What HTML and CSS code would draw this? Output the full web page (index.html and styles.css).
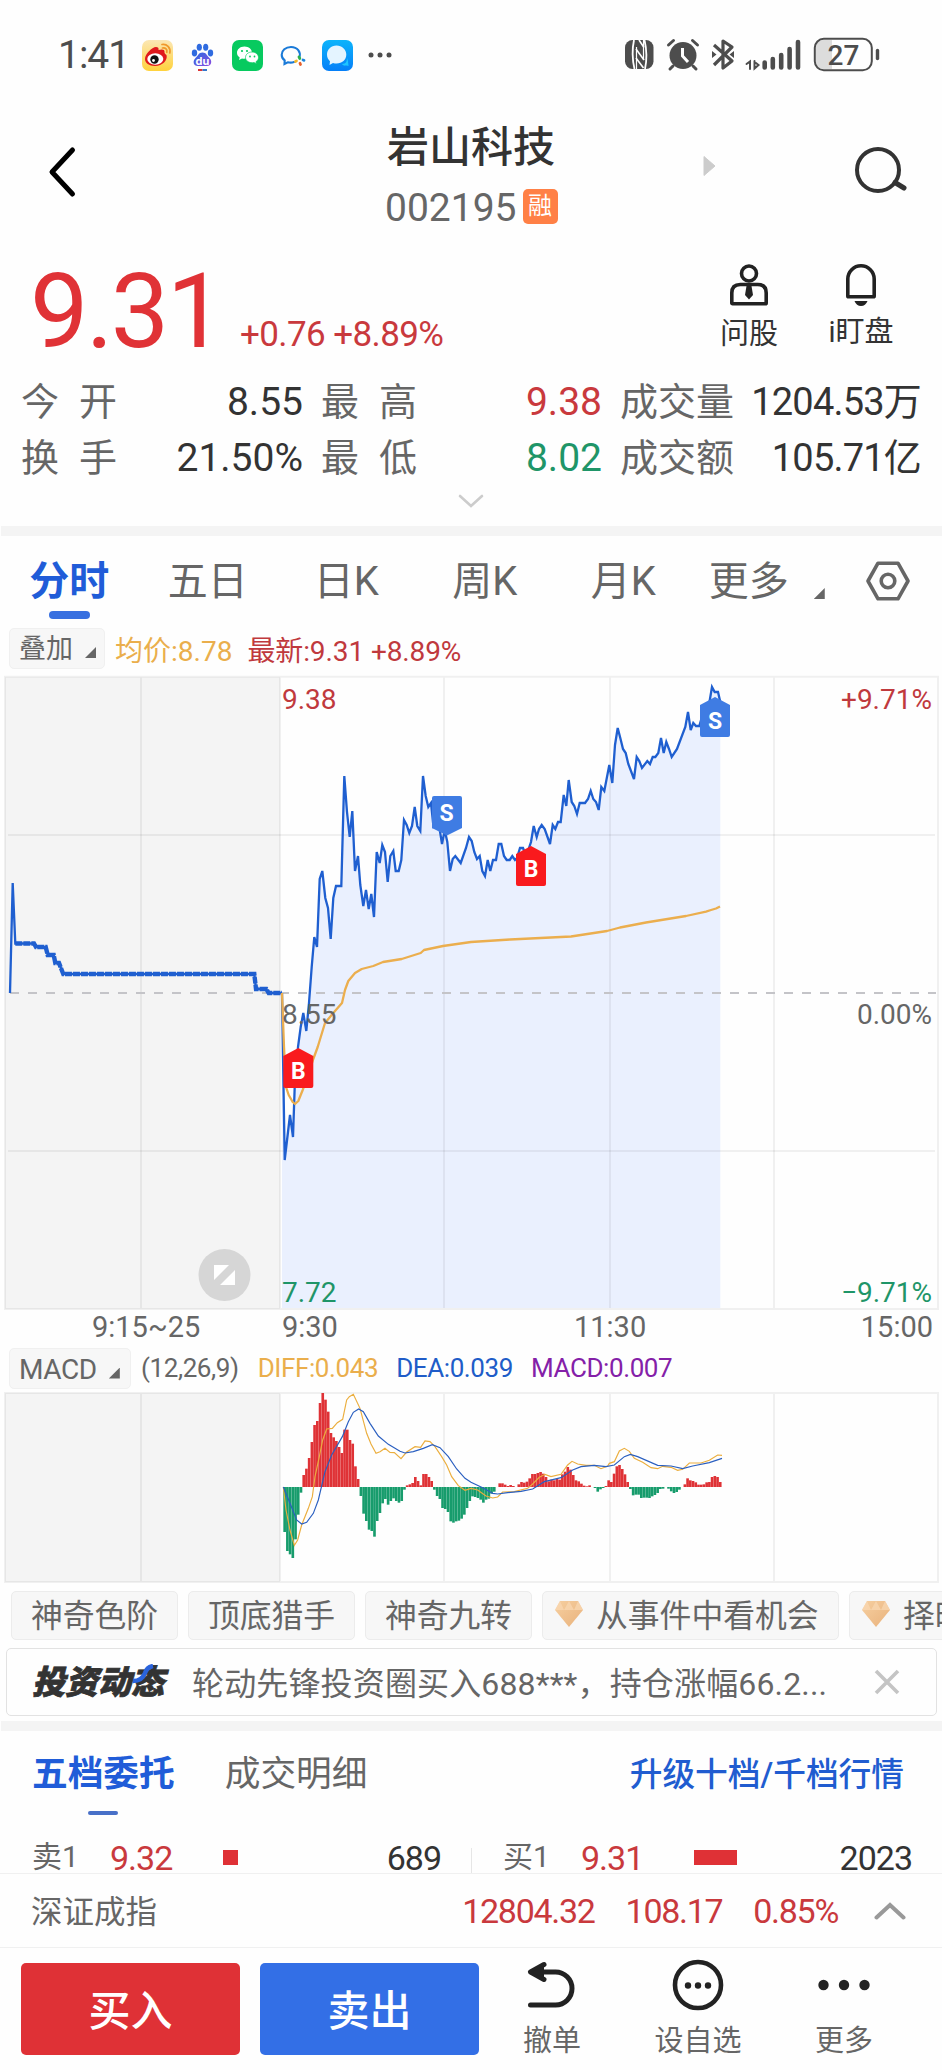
FILE: index.html
```html
<!DOCTYPE html>
<html lang="zh-CN">
<head>
  <meta charset="UTF-8">
  <meta name="viewport" content="width=device-width, initial-scale=1.0">
  <title>岩山科技 002195</title>
  <link rel="stylesheet" href="styles.css">
</head>
<body>
  <div class="status">
    <span class="time">1:41</span>
    <svg class="app" viewBox="0 0 31 31">
      <defs>
        <linearGradient id="wb" x1="0" y1="0" x2="0" y2="1"><stop offset="0" stop-color="#fbe7b5"/><stop offset="1" stop-color="#ffd23c"/></linearGradient>
        <linearGradient id="msg" x1="0" y1="0" x2="0" y2="1"><stop offset="0" stop-color="#0db4fb"/><stop offset="1" stop-color="#057ff8"/></linearGradient>
        <linearGradient id="du" x1="0" y1="0" x2="1" y2="1"><stop offset="0" stop-color="#2a6be0"/><stop offset="1" stop-color="#8a4be0"/></linearGradient>
        <linearGradient id="gem" x1="0" y1="0" x2="1" y2="1"><stop offset="0" stop-color="#f6cfa0"/><stop offset="1" stop-color="#e9b27c"/></linearGradient>
      </defs>
      <rect width="31" height="31" rx="7" fill="url(#wb)"/>
      <path d="M3 19C3 14 10 7 14 7c2 0 3 1 2.500 3 3-1 6.500-1 6 2-.2 1 .5 2 2 3 1.500 5-4 11-11.500 11C7 26 3 23 3 19z" fill="#e0191c"/>
      <ellipse cx="13.300" cy="19" rx="8" ry="5.800" fill="#fff"/>
      <circle cx="12.500" cy="19.500" r="4.200" fill="#111"/>
      <circle cx="11.500" cy="20.500" r="1.400" fill="#fff"/>
      <path d="M20 4.500c4.500-1 9 3 7.800 8.500M20.500 8c3-.5 5 1.500 4.300 4.300" fill="none" stroke="#f0982a" stroke-width="1.700" stroke-linecap="round"/>
    </svg>
    <svg class="app" viewBox="0 0 31 31">
      <g fill="#2f6be0">
        <ellipse cx="7.500" cy="13" rx="2.700" ry="3.400"/>
        <ellipse cx="12.300" cy="7.300" rx="2.600" ry="3.500"/>
        <ellipse cx="18.700" cy="7.300" rx="2.600" ry="3.500"/>
        <ellipse cx="23.500" cy="13" rx="2.700" ry="3.400"/>
      </g>
      <path d="M15.500 12.500c4 0 4 3 7 5.500 3 3 2 8-2.500 8h-9c-5 0-5.500-5-2.500-8 3-2.500 3-5.500 7-5.500z" fill="url(#du)"/>
      <text x="15.500" y="24.500" class="du-text">du</text>
      <path d="M11 30h4.500" stroke="#d33" stroke-width="2"/><path d="M15.500 30h4.500" stroke="#37c" stroke-width="2"/>
    </svg>
    <svg class="app" viewBox="0 0 31 31">
      <rect width="31" height="31" rx="7" fill="#07ca5f"/>
      <path d="M12.500 6.500c-4.500 0-7.500 3-7.500 6.300 0 2 1 3.700 2.700 4.800L7 20l3-1.500c4.500 1 10-1.500 10-5.700 0-3.500-3.300-6.300-7.500-6.300z" fill="#fff"/>
      <path d="M20 12c-3.800 0-6.500 2.500-6.500 5.500 0 3.500 4 6 8.500 5l2.500 1.300-.6-2c1.600-1 2.600-2.500 2.600-4.300 0-3-2.900-5.500-6.500-5.500z" fill="#fff" stroke="#07ca5f" stroke-width=".7"/>
      <g fill="#07ca5f"><circle cx="10" cy="11" r="1.100"/><circle cx="15" cy="11" r="1.100"/><circle cx="18" cy="16.500" r=".9"/><circle cx="22.500" cy="16.500" r=".9"/></g>
    </svg>
    <svg class="app" viewBox="0 0 31 31">
      <path d="M22.500 17c1.500-5-2-10-8.500-10-5.500 0-9.300 3.500-9.300 7.700 0 2.500 1.200 4.400 3 5.700L7.500 24l3.300-1.700c2 .5 4.200.5 6.200-.2" fill="none" stroke="#1a7ad8" stroke-width="2.100" stroke-linecap="round"/>
      <g fill="none" stroke-width="2.800" stroke-linecap="round"><path d="M22 17l.8 1.500" stroke="#2db14a"/><path d="M26 20l1 .3" stroke="#1a86dd"/><path d="M18.500 21.500l1-.6" stroke="#f3b52a"/><path d="M23.500 24.500l-.5-1.300" stroke="#e8602c"/></g>
    </svg>
    <svg class="app" viewBox="0 0 31 31">
      <rect width="31" height="31" rx="7" fill="url(#msg)"/>
      <path d="M20 24c4 0 5-3 5-6l1 3c0 2 .5 3 .5 5-2-.5-5 .5-6.500-2z" fill="#1fc6ff"/>
      <path d="M14.500 5.500C9 5.500 5 9.500 5 14.500c0 3 1 5 3 6.700L7.500 25l3.500-2c7 2 13.300-2 13.300-8.500 0-5-4.300-9-9.800-9z" fill="#e4f4ff"/>
    </svg>
    <svg class="more-dots" viewBox="0 0 24 6"><g fill="#4d4d4d"><circle cx="3" cy="3" r="2.500"/><circle cx="12" cy="3" r="2.500"/><circle cx="21" cy="3" r="2.500"/></g></svg>

    <svg class="sys" viewBox="620 36 262 38">
      <rect x="625" y="40" width="28.500" height="29" rx="7.500" fill="#4d4d4d"/>
      <path d="M634 40q-3 14 .5 29M644.500 40q3.500 15 .5 29" fill="none" stroke="#fff" stroke-width="1.800"/>
      <path d="M636.500 47v22M643.500 40v20" stroke="#fff" stroke-width="1.200"/>
      <path d="M636 49l8 11M636 58l7.500 10M639 40l5 7.500" stroke="#fff" stroke-width="1.600"/>
      <circle cx="683" cy="55.500" r="13.500" fill="#4d4d4d"/>
      <path d="M668.500 45l5-4.500M697.500 45l-5-4.500M673 66l-3 3M693 66l3 3" stroke="#4d4d4d" stroke-width="3" stroke-linecap="round"/>
      <path d="M682.500 48v8l5.500 6" fill="none" stroke="#fff" stroke-width="3"/>
      <path d="M714 45l18 16-9 7V41l9 6-18 18" fill="none" stroke="#4d4d4d" stroke-width="3.200" stroke-linejoin="round"/>
      <path d="M712 51l4.500 3.500L712 58zM734 51l-4.500 3.500L734 58z" fill="#4d4d4d"/>
      <g stroke="#4d4d4d" stroke-linecap="round">
        <path d="M746.500 64l3.500-2.500V69M754.500 61v7.500l4-3.500-2.500-2" fill="none" stroke-width="2"/>
        <path d="M764.700 62.500v5M772.800 59v8.500M781.200 55v12.500M789.600 49v18.500M798 42v25.500" stroke-width="4.600"/>
      </g>
      <path d="M832 40h-9q-7 0-7 7v15q0 7 7 7h9z" fill="#dcdcdc"/>
      <rect x="814.800" y="38.800" width="57" height="31.500" rx="9" fill="none" stroke="#4d4d4d" stroke-width="2"/>
      <path d="M877.500 50.500v8" stroke="#4d4d4d" stroke-width="3.400" stroke-linecap="round"/>
      <text x="843.500" y="64.500" class="battery-text">27</text>
    </svg>
  </div>

  <div class="nav">
    <svg class="back" viewBox="0 0 30 52"><path d="M25.500 4L5 26l20.500 22" fill="none" stroke="#000" stroke-width="5" stroke-linecap="round" stroke-linejoin="round"/></svg>
    <div class="stock">
      <div class="stock-name">岩山科技</div>
      <div class="stock-code">002195<span class="tag">融</span></div>
    </div>
    <svg class="next" viewBox="0 0 12 20"><path d="M1 .5L12 10 1 19.500z" fill="#ccc" stroke="#ccc" stroke-linejoin="round"/></svg>
    <svg class="search" viewBox="0 0 54 50"><circle cx="24" cy="23" r="21" fill="none" stroke="#333" stroke-width="4"/><path d="M41 35.500l9 5.500" stroke="#333" stroke-width="5" stroke-linecap="round"/></svg>
  </div>

  <div class="quote">
    <div class="quote-top">
      <span class="price">9.31</span>
      <span class="change">+0.76 +8.89%</span>
      <div class="action ask">
        <svg viewBox="0 0 40 44"><g fill="none" stroke="#222" stroke-width="3.600"><circle cx="20" cy="10.500" r="7.500"/><path d="M2.800 40V30q0-8.500 8.500-8.500h17.400q8.500 0 8.500 8.500v10q0 .8-.8.800H3.600q-.8 0-.8-.8z" stroke-linejoin="round"/></g><path d="M17.500 23h5l1.500 9-4 4.500-4-4.500z" fill="#222"/></svg>
        问股
      </div>
      <div class="action watch">
        <svg viewBox="0 0 40 44"><path d="M6.800 33V16a13.200 13.200 0 0 1 26.400 0v17q0 .8-.8.800H7.600q-.8 0-.8-.8z" fill="none" stroke="#222" stroke-width="3.600"/><path d="M13.500 38h13q-2 5-6.500 5t-6.500-5z" fill="#222"/></svg>
        i盯盘
      </div>
    </div>
    <div class="stats">
      <div><label class="wide">今开</label><b>8.55</b></div>
      <div><label class="wide">最高</label><b class="red">9.38</b></div>
      <div><label>成交量</label><b class="amount">1204.53万</b></div>
      <div><label class="wide">换手</label><b>21.50%</b></div>
      <div><label class="wide">最低</label><b class="green">8.02</b></div>
      <div><label>成交额</label><b class="amount">105.71亿</b></div>
    </div>
    <svg class="unfold" viewBox="0 0 26 14"><path d="M2 2l11 10L24 2" fill="none" stroke="#ccc" stroke-width="2.600" stroke-linecap="round"/></svg>
  </div>

  <div class="band"></div>

  <div class="tabs">
    <div class="tab active">分时</div>
    <div class="tab">五日</div>
    <div class="tab">日K</div>
    <div class="tab">周K</div>
    <div class="tab">月K</div>
    <div class="tab tab-more">更多<i class="corner"></i></div>
    <svg class="setting" viewBox="0 0 44 40"><g fill="none" stroke="#666" stroke-width="3.600"><path d="M12 2.200h20L42 20 32 37.800H12L2 20z" stroke-linejoin="round"/><circle cx="22" cy="20" r="6.800"/></g></svg>
  </div>

  <div class="info">
    <span class="pick">叠加<i class="corner"></i></span>
    <span class="avg">均价:8.78</span>
    <span class="last">最新:9.31 +8.89%</span>
  </div>

  <svg class="chart" viewBox="0 674 942 638">
    <rect x="5" y="677" width="275" height="632" fill="#f4f4f4"/>
    <path id="area" fill="#eaf0fe"/>
    <g class="grid">
      <path d="M5 676.700h933V1309H5zM141 677v632M280 677v632M444 677v632M610 677v632M774 677v632"/>
      <path d="M8 835h927M8 1151h927"/>
    </g>
    <path d="M10 993h926" stroke="#c4c4c8" stroke-width="2" stroke-dasharray="9 9"/>
    <polyline id="auction" class="price-line"/>
    <polyline id="auctionDots" class="auction-dots"/>
    <polyline id="priceLine" class="price-line"/>
    <polyline class="avg-line" points="282,993 284,1047 286,1087 288.700,1095 292.700,1102 295,1104 298.300,1101 302.700,1090 308,1075 313.300,1059 317.700,1047 325,1023 333.300,1013 342,1003 345,990 348.300,981 355,973 361.700,969 373.300,966 383,962 401.700,959 420.700,953 424,950 443,946 471,942 510,939.500 571,936.500 607,931 620,927.500 646,922.500 686,916 706,911.600 711,910 716,908.500 720,906.500"/>
    <g class="scale">
      <text x="282" y="709" fill="#c0393d">9.38</text>
      <text x="282" y="1024" fill="#666">8.55</text>
      <text x="282" y="1301.500" fill="#1f9568">7.72</text>
      <g text-anchor="end">
        <text x="932" y="709" fill="#c0393d">+9.71%</text>
        <text x="932" y="1024" fill="#666">0.00%</text>
        <text x="932" y="1301.500" fill="#1f9568">−9.71%</text>
      </g>
    </g>
    <g class="marks">
      <path d="M434 796h26q2 0 2 2v30l-15 7.500-15-7.500v-30q0-2 2-2z" fill="#3f7ce3"/><text x="446.500" y="821">S</text>
      <path d="M700 705l15-8 15 8v30q0 2-2 2h-26q-2 0-2-2z" fill="#3f7ce3"/><text x="715" y="729">S</text>
      <path d="M516 854l15-8 15 8v30q0 2-2 2h-26q-2 0-2-2z" fill="#f91a1d"/><text x="531" y="876.500">B</text>
      <path d="M283.300 1056l15-8 15 8v30q0 2-2 2h-26q-2 0-2-2z" fill="#f91a1d"/><text x="298.300" y="1079">B</text>
    </g>
    <circle cx="224.500" cy="1275" r="26" fill="#d6d6d6"/>
    <path d="M214 1265h15l-15 15zM235 1270v15h-15z" fill="#fff"/>
  </svg>

  <div class="axis">
    <span>9:15~25</span>
    <span>9:30</span>
    <span>11:30</span>
    <span>15:00</span>
  </div>

  <div class="macd-info">
    <span class="pick">MACD<i class="corner"></i></span>
    <span class="param">(12,26,9)</span>
    <span class="diff">DIFF:0.043</span>
    <span class="dea">DEA:0.039</span>
    <span class="macd">MACD:0.007</span>
  </div>

  <svg class="macd-chart" viewBox="0 300 2826 585">
    <rect x="15" y="309" width="825" height="567" fill="#f4f4f4"/>
    <path class="macd-grid" d="M15 309h2799v567H15zM423 309v567M840 309v567M1332 309v567M1830 309v567M2322 309v567"/>
    <g id="bars"></g>
    <polyline class="diff-line" points="850,591 858,660 870,720 883,766 893,750 905,705 925,655 937,620 945,560 958,500 968,450 980,417 997,415 1012,398 1028,388 1040,330 1048,320 1060,313 1080,355 1100,430 1113,462 1128,490 1140,485 1155,475 1170,487 1183,488 1203,506 1220,486 1245,470 1262,472 1275,453 1290,455 1305,470 1325,500 1340,525 1355,560 1375,587 1395,601 1413,595 1433,600 1458,618 1478,624 1493,621 1508,606 1543,605 1583,595 1598,582 1618,562 1635,553 1653,560 1683,553 1703,525 1716,514 1733,522 1758,526 1783,526 1803,536 1823,528 1828,520 1843,515 1858,483 1873,475 1888,484 1903,505 1928,517 1953,533 1973,536 1988,529 2013,532 2033,541 2048,538 2068,519 2103,519 2128,511 2153,495 2166,496"/>
    <polyline class="dea-line" points="850,591 870,640 890,690 905,702 920,697 940,670 955,630 975,545 995,495 1027,440 1045,395 1060,367 1076,357 1090,365 1110,400 1135,438 1165,463 1200,484 1215,489 1240,485 1270,475 1297,464 1320,473 1345,500 1370,537 1395,565 1413,577 1448,593 1478,610 1493,612 1523,608 1563,604 1598,597 1633,575 1683,563 1718,540 1743,530 1783,526 1818,530 1843,525 1873,500 1891,493 1913,500 1973,526 2013,528 2048,536 2078,528 2128,518 2166,505"/>
  </svg>

  <div class="chips">
    <span class="chip">神奇色阶</span>
    <span class="chip">顶底猎手</span>
    <span class="chip">神奇九转</span>
    <span class="chip vip">
      <svg viewBox="0 0 28 26"><path d="M5 0h18l5 9-14 17L0 9z" fill="url(#gem)"/><path d="M0 9h28L23 0l-4 9-5-9-5 9-4-9z" fill="#f9d9b4" opacity=".7"/></svg>从事件中看机会
    </span>
    <span class="chip vip">
      <svg viewBox="0 0 28 26"><path d="M5 0h18l5 9-14 17L0 9z" fill="url(#gem)"/><path d="M0 9h28L23 0l-4 9-5-9-5 9-4-9z" fill="#f9d9b4" opacity=".7"/></svg>择时
    </span>
  </div>

  <div class="news">
    <span class="news-logo">投资动态<svg viewBox="0 0 24 20"><path d="M1 17q9 0 12-8 2-6 8-7" fill="none" stroke="#2a63dc" stroke-width="4.500"/></svg></span>
    <span class="news-text">轮动先锋投资圈买入688***，持仓涨幅66.2...</span>
    <svg class="close" viewBox="0 0 26 26"><path d="M2 2l22 22M24 2L2 24" stroke="#c4c4c4" stroke-width="3.600"/></svg>
  </div>

  <div class="band"></div>

  <div class="level-tabs">
    <span class="level-tab active">五档委托</span>
    <span class="level-tab">成交明细</span>
    <a class="upgrade">升级十档/千档行情</a>
  </div>

  <div class="orders">
    <div class="order"><span>卖1</span><em>9.32</em><i class="vol ask-vol"></i><b>689</b></div>
    <div class="order buy"><span>买1</span><em>9.31</em><i class="vol bid-vol"></i><b>2023</b></div>
  </div>

  <div class="index">
    <span class="index-name">深证成指</span>
    <span>12804.32</span>
    <span>108.17</span>
    <span>0.85%</span>
    <svg viewBox="0 0 32 18"><path d="M2.500 15.500L16 3l13.500 12.500" fill="none" stroke="#999" stroke-width="4" stroke-linecap="round"/></svg>
  </div>

  <div class="footer">
    <button class="btn btn-buy">买入</button>
    <button class="btn btn-sell">卖出</button>
    <div class="tool tool-cancel">
      <svg viewBox="0 0 52 54"><g fill="none" stroke="#222" stroke-width="5" stroke-linecap="round" stroke-linejoin="round"><path d="M4.500 48h25a16.500 16.500 0 0 0 0-33H6"/><path d="M18 7.500L4.500 15 18 22.500"/></g><path d="M5 15l13-6v12z" fill="#222"/></svg>
      撤单
    </div>
    <div class="tool tool-fav">
      <svg viewBox="0 0 52 54"><circle cx="26" cy="28" r="23" fill="none" stroke="#222" stroke-width="4.600"/><g fill="#222"><circle cx="16" cy="28.500" r="3.200"/><circle cx="26" cy="28.500" r="3.200"/><circle cx="36" cy="28.500" r="3.200"/></g></svg>
      设自选
    </div>
    <div class="tool tool-more">
      <svg viewBox="0 0 52 54"><g fill="#222"><circle cx="5.500" cy="28" r="5.200"/><circle cx="26" cy="28" r="5.200"/><circle cx="46.500" cy="28" r="5.200"/></g></svg>
      更多
    </div>
  </div>

  <script>
    // 集合竞价
    const auction = "10,993 12.7,883 15.3,943.5 34,943.5 36,947 45.7,947 47.7,955 53.7,955 55.3,963 59,963 61.7,970 63.3,974 254.3,974 256,989 266.3,989 268.7,993 282,993";
    // 分时价格
    const prices = "282,993 284.7,1160 290,1115 293,1137 294.7,1087 298,1047 300.7,1027 303.3,1013 306.3,1031 309,1003 311.7,967 314.3,937 317,947 319.7,879 322.3,871 325.3,898 328,908 330.7,939 333.3,898 336,886 341.3,886 344.3,776 347,812 349.7,837 352.3,811 355,871 358,856 360.3,885 363.3,906 366,890 368.7,909 371.3,894 374,917 376.7,852 379.7,863 382.3,845 385,852 387.7,882 390.3,856 393.3,851 395.7,871 398.7,871 401.3,860 404,820 406.7,825 409.3,833 412,826 414.7,807 417.3,826 420.3,831 423,776 425.7,796 428.3,807 431,803 433.5,827 439,825 442,844 444.7,830 447.3,842 450,871 452.7,859 455.3,856 460.7,863 466,848 469,837 471.7,841 474.3,852 477,859 479.7,856 482.3,871 485,876 487.7,860 490.3,871 493,860 496,860 498.7,844 501.3,844 504,856 506.7,860 509.7,860 512.3,856 515,860 517,858 520,848 523,848 525.7,855 528.3,850 531,842 533.7,826 536.7,837 539,829 541.7,825 544.7,829 550,844 552.7,825 555.3,829 558,822 560.7,822 563.7,795 566.3,806 568.7,780 571.7,802 574.3,806 577,814 579.7,803 585,803 588,799 590.7,791 593.3,799 596,802 598.7,810 601.3,787 604.3,791 609.3,765 612.3,783 615,745 617.7,728 620.3,738 623,749 625.7,753 628.3,764 634,779 636.7,757 639.3,761 642,768 647.3,761 650,764 652.7,757 655.3,757 658.3,753 661,738 663.7,753 666.3,742 669,749 671.7,757 677,749 685.3,727 688,712 690.7,730 693.3,723 696,726 699.3,726 704,710 709.3,703 712,687 714.7,692 718,692 720.3,702";
    document.getElementById("auction").setAttribute("points", auction);
    document.getElementById("auctionDots").setAttribute("points", auction.split(" ").slice(2).join(" "));
    document.getElementById("priceLine").setAttribute("points", prices);
    document.getElementById("area").setAttribute("d", `M${prices.split(" ").join("L")}V1308H282z`);

    // MACD 柱，每分钟一根
    const macd = [
      -135, -192, -202, -213, -157, -83, -17, 36, 55, 87, 135, 186, 198, 252, 282, 262, 226, 162, 149, 138, 120, 102,
      172, 172, 141, 130, 62, 24, -27, -80, -102, -128, -132, -149, -102, -78, -49, -36, -53, -42, -34, -42, -47, -42, -8,
      5, 8, 12, 30, 18, 5, 39, 39, 30, 18, -8, -27, -36, -63, -66, -75, -103, -107, -103, -101, -95, -83, -63, -42,
      -28, -30, -33, -38, -47, -38, -35, -20, -14, 0, 11, 11, 7, 3, 6, 3, 0, 8, 15, 13, 16, 26, 39, 39, 42, 45, 40, 30,
      17, 22, 20, 24, 22, 38, 46, 60, 52, 36, 20, 17, 10, 4, 2, 5, 0, -3, -14, -7, -3, 3, 20, 15, 40, 62, 66, 54, 38, 15,
      -6, -25, -23, -23, -33, -32, -32, -33, -28, -24, -18, -6, -5, 0, -5, -13, -18, -15, -8, 0,
      8, 26, 20, 18, 14, 7, 7, 8, 14, 15, 30, 33, 30, 15
    ];
    const step = (2165 - 850) / macd.length;
    document.getElementById("bars").innerHTML = macd.map((v, i) => {
      const y = v > 0 ? 591 - v : 591;
      return `<rect x="${(850 + i * step).toFixed(1)}" y="${y}" width="${(step - 0.3).toFixed(1)}" height="${Math.abs(v)}" fill="${v > 0 ? "#df3236" : "#179c6c"}"/>`;
    }).join("");
  </script>
</body>
</html>
```

FILE: styles.css
```css
* {
  box-sizing: border-box;
}
body {
  margin: 0;
  width: 942px;
  height: 2070px;
  overflow: hidden;
  background: #fefefe;
  color: #333;
  font-family: Roboto, "Noto Sans CJK SC", sans-serif;
  white-space: nowrap;
}
svg {
  display: block;
  flex: none;
}
b, em, i {
  font-weight: normal;
  font-style: normal;
}
.red { color: #c9393d; }
.green { color: #1f9568; }

/* 状态栏 */
.status {
  height: 110px;
  padding-left: 58px;
  display: flex;
  align-items: center;
}
.time {
  width: 84px;
  font-size: 39px;
  letter-spacing: -1px;
  color: #4d4d4d;
}
.app {
  width: 31px;
  height: 31px;
  margin-right: 14px;
}
.du-text {
  font: bold 11px Inter, sans-serif;
  fill: #fff;
  text-anchor: middle;
}
.more-dots {
  width: 24px;
  height: 6px;
  margin-left: 1px;
}
.sys {
  width: 262px;
  height: 38px;
  margin-left: 228px;
}
.battery-text {
  font-size: 28px;
  font-weight: 500;
  fill: #4d4d4d;
  text-anchor: middle;
}

/* 标题 */
.nav {
  height: 130px;
  display: flex;
  align-items: flex-start;
}
.back {
  width: 30px;
  height: 52px;
  margin: 36px 0 0 47px;
}
.stock {
  width: 188px;
  margin: 8px 0 0 300px;
}
.stock-name {
  margin-left: 10px;
  font-size: 42px;
  font-weight: 500;
  line-height: 60px;
}
.stock-code {
  display: flex;
  align-items: center;
  margin-left: 8px;
  height: 60px;
  font-size: 39px;
  color: #666;
}
.tag {
  width: 35px;
  height: 35px;
  margin: -3px 0 0 6px;
  border-radius: 5px;
  background: #ff8046;
  color: #fff;
  font-size: 24px;
  line-height: 34px;
  text-align: center;
}
.next {
  width: 12px;
  height: 20px;
  margin: 46px 0 0 138px;
}
.search {
  width: 54px;
  height: 50px;
  margin: 37px 0 0 139px;
}

/* 报价 */
.quote {
  height: 286px;
}
.quote-top {
  height: 134px;
  display: flex;
  align-items: flex-start;
}
.price {
  width: 210px;
  margin-left: 30px;
  font-size: 104px;
  line-height: 144px;
  letter-spacing: -2.500px;
  color: #e03236;
}
.change {
  width: 466px;
  padding-top: 74px;
  font-size: 35px;
  line-height: 41px;
  letter-spacing: -0.6px;
  color: #c9393d;
}
.action {
  width: 86px;
  padding-top: 23px;
  display: flex;
  flex-direction: column;
  align-items: center;
  font-size: 29px;
  line-height: 40px;
}
.action svg {
  width: 40px;
  height: 44px;
  margin-bottom: 7px;
}
.watch {
  margin-left: 26px;
}
.watch svg {
  margin-bottom: 5px;
}
.stats {
  display: grid;
  grid-template-columns: 281px 280px 300px;
  grid-auto-rows: 56px;
  column-gap: 19px;
  padding-left: 21px;
  font-size: 38px;
  line-height: 56px;
}
.stats div {
  display: flex;
  justify-content: space-between;
}
.stats label {
  color: #666;
}
.stats .wide {
  letter-spacing: 20px;
}
.stats b {
  margin-right: -1px;
  font-size: 39px;
}
.stats .amount {
  font-size: 38px;
  letter-spacing: -0.8px;
}
.unfold {
  width: 26px;
  height: 14px;
  margin: 8px auto 0;
}
.band {
  height: 10px;
  margin-left: 1px;
  background: #f4f4f4;
}

/* 周期切换 */
.tabs {
  height: 89px;
  display: flex;
}
.tab {
  position: relative;
  width: 138.500px;
  text-align: center;
  font-size: 40px;
  line-height: 91px;
  color: #666;
}
.tab.active {
  font-weight: bold;
  color: #205cd8;
}
.tab.active::after {
  content: "";
  position: absolute;
  left: 49px;
  top: 75px;
  width: 41px;
  height: 8px;
  border-radius: 4px;
  background: #3870e0;
}
.corner {
  display: inline-block;
  width: 11px;
  height: 11px;
  background: #666;
  clip-path: polygon(100% 0, 100% 100%, 0 100%);
}
.tab-more {
  padding-left: 10px;
}
.tab-more .corner {
  margin: 0 0 -4px 25px;
}
.setting {
  width: 44px;
  height: 40px;
  margin: 25px 0 0 35px;
}

.info, .macd-info {
  display: flex;
  align-items: center;
  font-size: 28px;
}
.info {
  height: 49px;
  padding: 0 0 2px 9px;
}
.pick {
  height: 41px;
  padding-left: 9px;
  border: 1px solid #f0f0f0;
  border-radius: 5px;
  background: #f7f7f7;
  color: #666;
  font-size: 27px;
  line-height: 40px;
}
.info .pick {
  width: 96px;
}
.pick .corner {
  margin-left: 12px;
}
.avg {
  margin-left: 10px;
  color: #eaae4c;
}
.last {
  margin-left: 15px;
  letter-spacing: -0.1px;
  color: #c0393d;
}

/* 分时图 */
.chart {
  width: 942px;
  height: 638px;
}
.grid path {
  fill: none;
  stroke: #000;
  stroke-opacity: 0.055;
  stroke-width: 2;
}
.price-line {
  fill: none;
  stroke: #1f5fd0;
  stroke-width: 2.300;
}
.auction-dots {
  fill: none;
  stroke: #1f5fd0;
  stroke-width: 4.400;
  stroke-dasharray: 7 1;
}
.avg-line {
  fill: none;
  stroke: #ebae4e;
  stroke-width: 2.300;
  stroke-linejoin: round;
}
.scale {
  font-size: 28px;
}
.marks text {
  font: bold 23px Roboto, sans-serif;
  fill: #fff;
  text-anchor: middle;
}
.axis {
  height: 31px;
  display: grid;
  grid-template-columns: 190px 155px 262px 239px;
  padding-left: 92px;
  font-size: 29px;
  line-height: 31px;
  color: #666;
}
.axis span:nth-child(3) {
  padding-left: 137px;
}
.axis span:nth-child(4) {
  text-align: right;
  padding-right: 5px;
}

/* MACD */
.macd-info {
  height: 47px;
  padding: 3px 0 0 9px;
  font-size: 26px;
  letter-spacing: -0.4px;
}
.macd-info .pick {
  width: 122px;
  font-size: 28px;
  line-height: 41px;
}
.param {
  margin-left: 10px;
  color: #666;
}
.diff {
  margin-left: 19px;
  color: #eaae4c;
}
.dea {
  margin-left: 18px;
  color: #205cc8;
}
.macd {
  margin-left: 18px;
  color: #8420a8;
}
.macd-chart {
  width: 942px;
  height: 195px;
}
.macd-grid {
  fill: none;
  stroke: #000;
  stroke-opacity: 0.055;
  stroke-width: 6;
}
.diff-line, .dea-line {
  fill: none;
  stroke: #ebae3e;
  stroke-width: 3.500;
}
.dea-line {
  stroke: #2a5fc0;
}

.chips {
  height: 63px;
  padding: 6px 0 0 11px;
  display: flex;
  gap: 10px;
  overflow: hidden;
}
.chip {
  flex: none;
  width: 167px;
  height: 49px;
  border: 1px solid #ececec;
  border-radius: 5px;
  background: #f7f7f7;
  color: #666;
  font-size: 31.800px;
  line-height: 49px;
  text-align: center;
}
.vip {
  width: 297px;
  padding-left: 12px;
  display: flex;
}
.vip svg {
  width: 28px;
  height: 26px;
  margin: 9px 13px 0 0;
}

.news {
  width: 931px;
  height: 68px;
  margin: 0 0 5px 6px;
  padding-left: 25px;
  display: flex;
  align-items: center;
  border: 1px solid #e2e2e2;
  border-radius: 5px;
}
.news-logo {
  position: relative;
  width: 160px;
  margin-top: -4px;
  font-size: 33px;
  font-weight: 900;
  font-style: italic;
  -webkit-text-stroke: 0.8px #333;
}
.news-logo svg {
  position: absolute;
  left: 100px;
  top: 8px;
  width: 24px;
  height: 20px;
}
.news-text {
  width: 682px;
  margin-top: -3px;
  font-size: 32px;
  letter-spacing: 0.15px;
  color: #666;
}
.close {
  width: 26px;
  height: 26px;
}

/* 盘口 */
.level-tabs {
  height: 102px;
  padding: 18px 38px 0 32px;
  display: flex;
}
.level-tab {
  position: relative;
  margin-right: 50px;
  font-size: 35.700px;
  line-height: 50px;
  color: #666;
}
.level-tab.active {
  font-weight: bold;
  color: #205cd8;
}
.level-tab.active::after {
  content: "";
  position: absolute;
  left: 56px;
  top: 62px;
  width: 30px;
  height: 4px;
  border-radius: 2px;
  background: #4870c8;
}
.upgrade {
  margin-left: auto;
  font-size: 32.700px;
  font-weight: 500;
  line-height: 52px;
  color: #205cd0;
}
.orders {
  height: 40px;
  display: flex;
}
.order {
  width: 471px;
  padding: 6px 30px 0 32px;
  display: flex;
  font-size: 34px;
  line-height: 38px;
  letter-spacing: -1px;
}
.order.buy {
  position: relative;
}
.order.buy::before {
  content: "";
  position: absolute;
  left: 0;
  top: 15px;
  width: 1px;
  height: 25px;
  background: #e6e6e6;
}
.order span {
  width: 78px;
  font-size: 30px;
  line-height: 36px;
  letter-spacing: 0;
  color: #666;
}
.order em {
  width: 113px;
  color: #c9393d;
}
.order b {
  margin-left: auto;
}
.vol {
  height: 15px;
  margin-top: 11px;
  background: #df3136;
}
.ask-vol { width: 15px; }
.bid-vol { width: 43px; }

.index {
  height: 75px;
  padding: 0 36px 0 31px;
  display: flex;
  align-items: center;
  border: solid #f0f0f0;
  border-width: 1px 0;
  font-size: 34px;
  letter-spacing: -1.300px;
  color: #c9393d;
}
.index span {
  margin-right: 31px;
}
.index .index-name {
  margin: -3px auto 0 0;
  font-size: 31.500px;
  letter-spacing: 0;
  color: #666;
}
.index svg {
  width: 32px;
  height: 18px;
  margin-left: 5px;
}

/* 底部 */
.footer {
  height: 122px;
  display: flex;
}
.btn {
  width: 219px;
  height: 92px;
  margin: 15px 0 0 21px;
  padding: 0 0 4px;
  border: none;
  border-radius: 5px;
  background: #df3136;
  color: #fff;
  font-family: inherit;
  font-size: 42px;
  font-weight: 500;
}
.btn-sell {
  margin-left: 20px;
  background: #336fe6;
}
.tool {
  display: flex;
  flex-direction: column;
  align-items: center;
  width: 100px;
  padding-top: 9px;
  font-size: 29px;
  line-height: 40px;
  color: #666;
}
.tool svg {
  width: 52px;
  height: 54px;
  margin-bottom: 10px;
}
.tool-cancel {
  margin-left: 23px;
}
.tool-fav {
  margin-left: 46px;
}
.tool-more {
  margin-left: 46px;
}
```
